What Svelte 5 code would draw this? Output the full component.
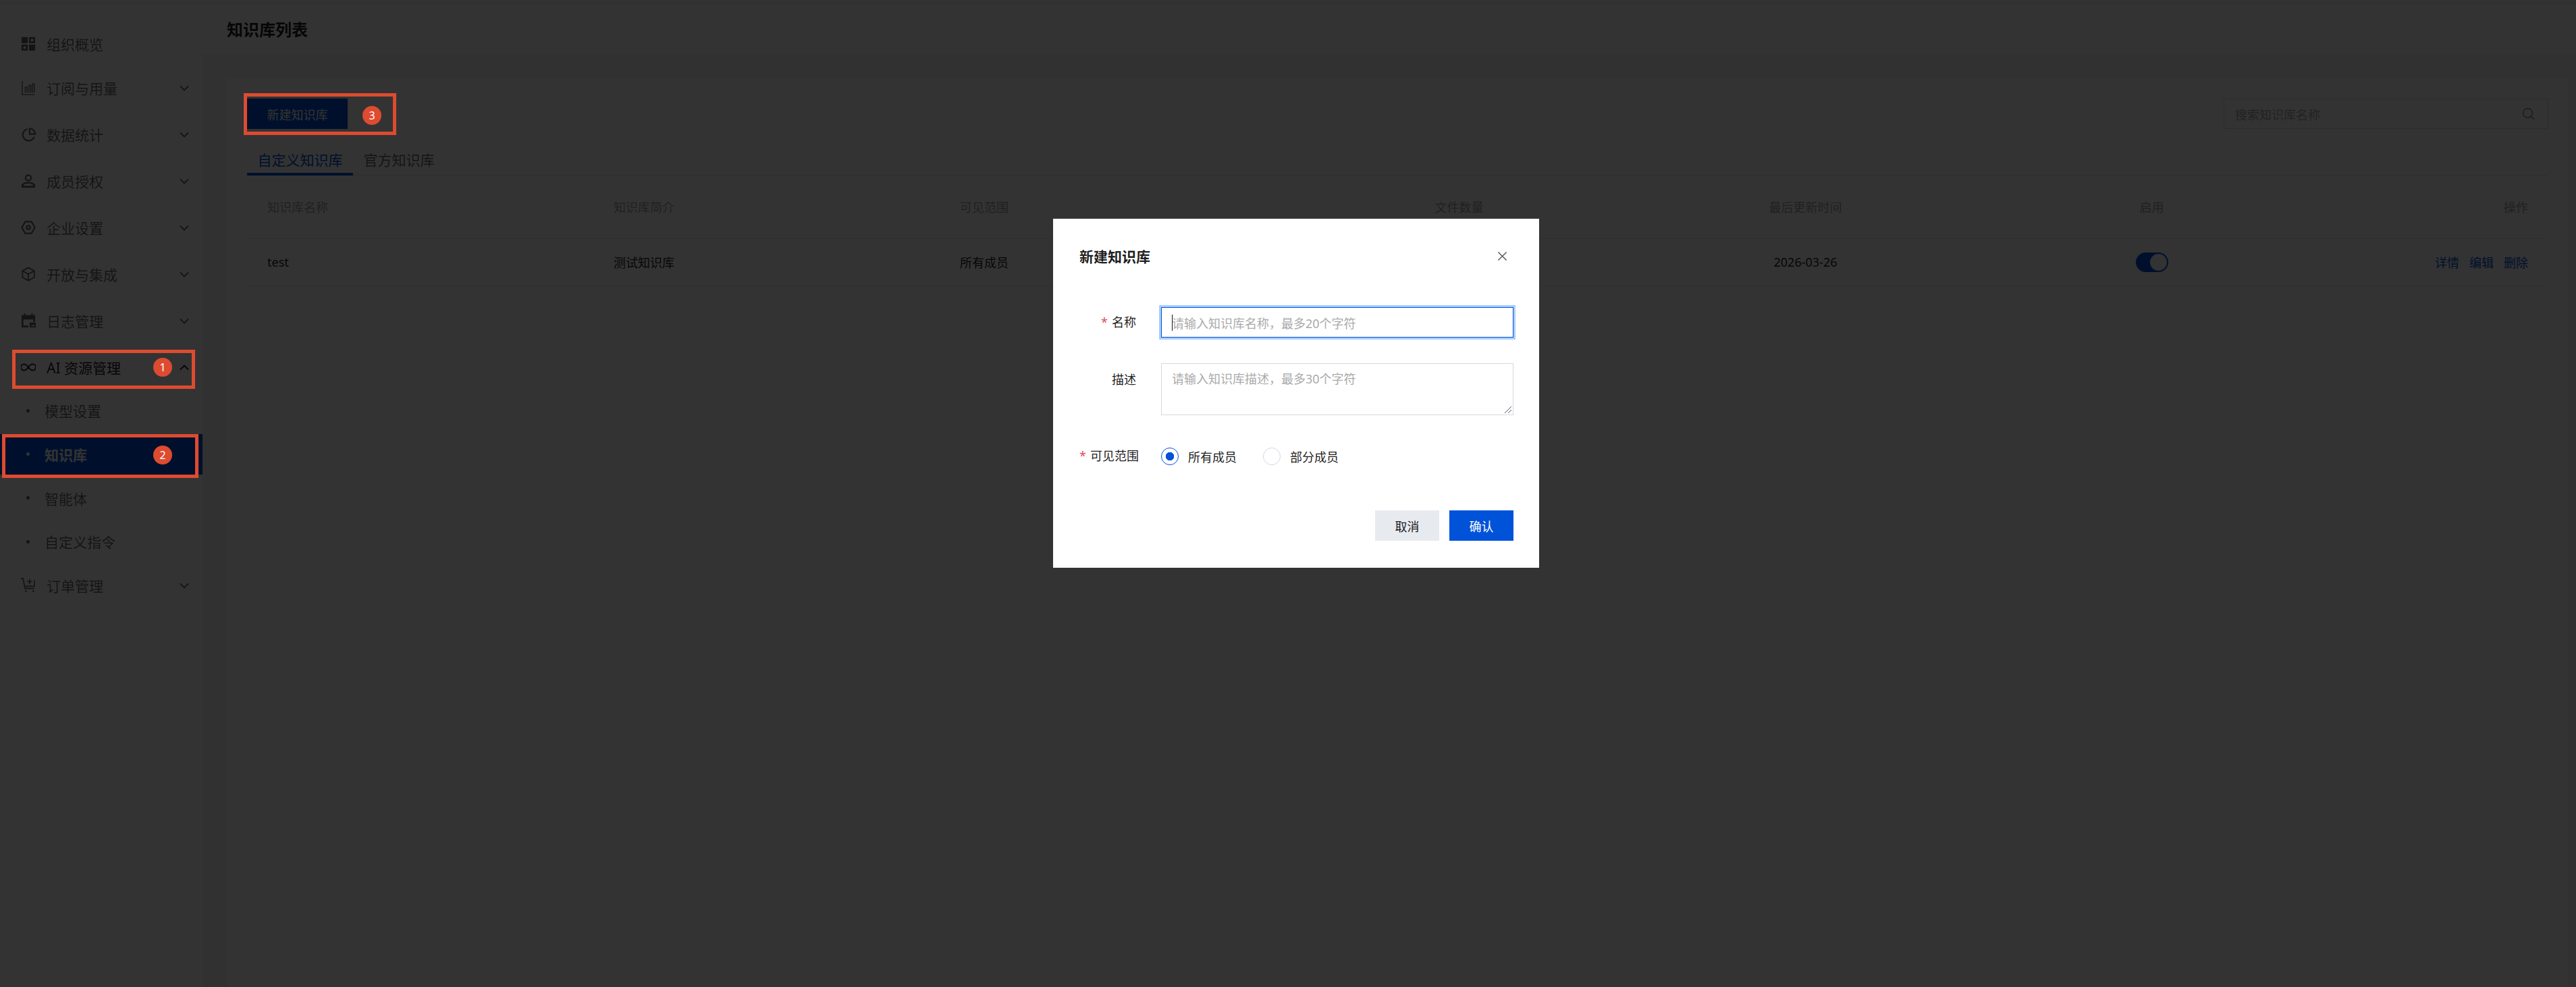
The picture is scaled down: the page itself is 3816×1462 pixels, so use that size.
<script>
  const menu = [
    { id: 'overview', label: '组织概览' },
    { id: 'usage', label: '订阅与用量', arrow: true },
    { id: 'stats', label: '数据统计', arrow: true },
    { id: 'members', label: '成员授权', arrow: true },
    { id: 'company', label: '企业设置', arrow: true },
    { id: 'open', label: '开放与集成', arrow: true },
    { id: 'logs', label: '日志管理', arrow: true },
  ];

  const subMenu = [
    { label: '模型设置' },
    { label: '知识库', active: true, mark: 2 },
    { label: '智能体' },
    { label: '自定义指令' },
  ];

  const columns = ['知识库名称', '知识库简介', '可见范围', '文件数量', '最后更新时间', '启用', '操作'];
</script>

{#snippet menuIcon(id)}
  <svg class="menu-icon" viewBox="0 0 24 24" fill="none" stroke="currentColor" stroke-width="2">
    {#if id === 'overview'}
      <path fill="currentColor" stroke="none" fill-rule="evenodd" d="M1 1h10v10H1zM13 1h10v10H13zm3 3v4h4V4zM1 13h10v10H1zm3 3v4h4v-4zM13 13h10v10H13z" />
    {:else if id === 'usage'}
      <path stroke-width="1.5" d="M2 1v22h20M7 20v-9h3v9M13 20V8h3v12M18.500 20V6h3v14" />
    {:else if id === 'stats'}
      <path stroke-width="2.400" d="M10.500 3.500a9.500 9.500 0 1 0 11 12.500M14 2.500v9h9a9 9 0 0 0-9-9z" />
    {:else if id === 'members'}
      <circle cx="12" cy="7" r="4.500" stroke-width="2.400" />
      <path fill="currentColor" stroke="none" fill-rule="evenodd" d="M1 23v-4c0-3 5-5.500 11-5.500S23 16 23 19v4zm3-3h16v-1c-1-1.500-4-2.800-8-2.800S5 17.500 4 19z" />
    {:else if id === 'company'}
      <path stroke-width="2.400" d="M7 2.500h10l5.500 9.500-5.500 9.500H7L1.500 12z" />
      <circle cx="12" cy="12" r="3" stroke-width="2.400" />
    {:else if id === 'open'}
      <path d="M12 1.500l9.500 5.300v10.400L12 22.500l-9.500-5.300V6.800zM2.500 6.800L12 12l9.500-5.200M12 12v10.500" />
    {:else if id === 'logs'}
      <path fill="currentColor" stroke="none" fill-rule="evenodd" d="M1 3h4V0h2v3h10V0h2v3h4v11h-3V10H4v10h8v3H1zM14 15h10v8H14zm3 4v2h5v-2z" />
    {/if}
  </svg>
{/snippet}

{#snippet arrow(up = false)}
  <svg class="arrow" class:up viewBox="0 0 14 9" fill="none" stroke="currentColor" stroke-width="1.800">
    <path d="M1 1.500l6 6 6-6" />
  </svg>
{/snippet}

<div class="page">
  <div class="strip"></div>

  <div class="body">
    <aside class="sidebar">
      <nav class="menu">
        {#each menu as item}
          <div class="item">
            {@render menuIcon(item.id)}
            <span class="item-label">{item.label}</span>
            {#if item.arrow}{@render arrow()}{/if}
          </div>
        {/each}

        <div class="item item-open">
          <svg class="menu-icon" viewBox="0 0 24 24" fill="none" stroke="currentColor" stroke-width="2">
            <path d="M12 12c-2.500-3.500-4.500-5-7-5a5 5 0 0 0 0 10c2.500 0 4.500-1.500 7-5s4.500-5 7-5a5 5 0 0 1 0 10c-2.500 0-4.500-1.500-7-5z" />
          </svg>
          <span class="item-label">AI 资源管理</span>
          {@render arrow(true)}
          <span class="mark mark-ai"><i class="badge">1</i></span>
        </div>

        {#each subMenu as sub}
          <div class="sub" class:active={sub.active}>
            <span class="dot"></span>
            <span>{sub.label}</span>
            {#if sub.mark}<span class="mark mark-kb"><i class="badge">{sub.mark}</i></span>{/if}
          </div>
        {/each}

        <div class="item">
          <svg class="menu-icon" viewBox="0 0 24 24" fill="none" stroke="currentColor" stroke-width="1.800">
            <path d="M0 1h3.500l3 16h15M5 13.500h17V4M14 2v8M10 6h8" />
            <circle cx="8" cy="21.500" r="1.500" fill="currentColor" stroke="none" />
            <circle cx="20" cy="21.500" r="1.500" fill="currentColor" stroke="none" />
          </svg>
          <span class="item-label">订单管理</span>
          {@render arrow()}
        </div>
      </nav>
    </aside>

    <div class="main">
      <header class="topbar">
        <h1>知识库列表</h1>
      </header>

      <section class="card">
        <div class="toolbar">
          <div class="create-wrap">
            <button type="button" class="btn-create">新建知识库</button>
            <span class="mark mark-create"><i class="badge">3</i></span>
          </div>
          <div class="search">
            <span>搜索知识库名称</span>
            <svg viewBox="0 0 20 20" fill="none" stroke="currentColor" stroke-width="1.200">
              <circle cx="9" cy="9" r="6.500" />
              <path d="M13.500 13.500l4.500 4.500" />
            </svg>
          </div>
        </div>

        <div class="tabs">
          <span class="tab tab-active">自定义知识库</span>
          <span class="tab">官方知识库</span>
        </div>

        <table>
          <thead>
            <tr>
              {#each columns as col}<th>{col}</th>{/each}
            </tr>
          </thead>
          <tbody>
            <tr>
              <td>test</td>
              <td>测试知识库</td>
              <td>所有成员</td>
              <td>1</td>
              <td>2026-03-26</td>
              <td><span class="switch"><span class="knob"></span></span></td>
              <td class="actions"><a href="#a">详情</a><a href="#a">编辑</a><a href="#a">删除</a></td>
            </tr>
          </tbody>
        </table>
      </section>
    </div>
  </div>

  <div class="mask">
    <div class="dialog">
      <div class="dialog-head">
        <h2>新建知识库</h2>
        <svg class="close" viewBox="0 0 16 16" fill="none" stroke="currentColor" stroke-width="1.500">
          <path d="M1.500 1.500l13 13M14.500 1.500l-13 13" />
        </svg>
      </div>

      <div class="field">
        <span class="field-label"><em>*</em>名称</span>
        <div class="input">
          <span class="caret"></span>
          <span class="placeholder">请输入知识库名称，最多20个字符</span>
        </div>
      </div>

      <div class="field field-desc">
        <span class="field-label">描述</span>
        <div class="textarea">
          <span class="placeholder">请输入知识库描述，最多30个字符</span>
          <svg class="grip" viewBox="0 0 12 12" stroke="#555" stroke-width="1">
            <path d="M1 11L11 1M6 11l5-5" />
          </svg>
        </div>
      </div>

      <div class="field field-radio">
        <span class="field-label"><em>*</em>可见范围</span>
        <div class="radios">
          <span class="radio radio-on"><span class="circle"></span>所有成员</span>
          <span class="radio"><span class="circle"></span>部分成员</span>
        </div>
      </div>

      <div class="dialog-foot">
        <button type="button" class="btn btn-cancel">取消</button>
        <button type="button" class="btn btn-ok">确认</button>
      </div>
    </div>
  </div>
</div>

<style>
  :global(body) {
    margin: 0;
    font-family: "Noto Sans", "Noto Sans CJK SC", sans-serif;
  }
  .page {
    position: relative;
    display: flex;
    flex-direction: column;
    width: 3816px;
    height: 1462px;
    overflow: hidden;
    background: #ffffff;
    color: rgba(0, 0, 0, 0.9);
  }
  .strip {
    height: 5px;
    flex: none;
    box-sizing: border-box;
    border-bottom: 1px solid #e4e4e4;
  }
  .body {
    display: flex;
    flex: 1;
    min-height: 0;
  }

  .sidebar {
    width: 300px;
    flex: none;
    background: #fff;
  }
  .menu {
    padding-top: 30px;
    color: rgba(0, 0, 0, 0.6);
    font-size: 21px;
  }
  .item {
    position: relative;
    display: flex;
    align-items: center;
    height: 60px;
    padding-left: 31px;
    margin-bottom: 9px;
  }
  .item:first-child {
    margin-bottom: 5px;
  }
  .item-open {
    color: rgba(0, 0, 0, 0.9);
    margin-bottom: 4.330px;
  }
  .menu-icon {
    width: 22px;
    height: 22px;
    flex: none;
  }
  .item-label {
    margin-left: 16px;
  }
  .arrow {
    position: absolute;
    left: 266px;
    top: 26px;
    width: 14px;
    height: 9px;
  }
  .arrow.up {
    transform: rotate(180deg);
  }
  .sub {
    position: relative;
    display: flex;
    align-items: center;
    height: 60px;
    margin-bottom: 4.670px;
    padding-left: 39px;
    gap: 22px;
  }
  .sub.active {
    background: #0052d9;
    color: #fff;
    font-weight: 700;
  }
  .dot {
    width: 5px;
    height: 5px;
    border-radius: 50%;
    background: currentColor;
    flex: none;
  }

  .mark {
    position: absolute;
    z-index: 20;
    box-sizing: border-box;
    border: 5px solid #dd4b30;
  }
  .badge {
    position: absolute;
    width: 28px;
    height: 28px;
    border-radius: 50%;
    background: #dd4b30;
    color: #fff;
    font-size: 16px;
    font-style: normal;
    font-weight: 400;
    line-height: 28px;
    text-align: center;
  }
  .mark-ai {
    left: 18px;
    top: 4px;
    width: 271px;
    height: 58px;
  }
  .mark-ai .badge {
    left: 204px;
    top: 7px;
  }
  .mark-kb {
    left: 3px;
    top: 0;
    width: 291px;
    height: 65px;
  }
  .mark-kb .badge {
    left: 219px;
    top: 12px;
  }
  .mark-create {
    left: -5px;
    top: -8px;
    width: 226px;
    height: 62px;
  }
  .mark-create .badge {
    left: 171px;
    top: 14px;
  }

  .main {
    flex: 1;
    min-width: 0;
    background: #f3f5f8;
  }
  .topbar {
    display: flex;
    align-items: center;
    height: 75px;
    padding-left: 36px;
    background: #fff;
  }
  .topbar h1 {
    margin: 0;
    font-size: 24px;
    font-weight: 700;
  }
  .card {
    margin: 36px 11px 0 36px;
    padding: 30px 30px 0;
    height: 1346px;
    background: #fff;
  }
  .toolbar {
    display: flex;
    justify-content: space-between;
  }
  .create-wrap {
    position: relative;
  }
  .btn-create {
    display: block;
    width: 149px;
    height: 45px;
    border: 0;
    padding: 0;
    background: #0052d9;
    color: #fff;
    font: inherit;
    font-size: 18px;
  }
  .search {
    display: flex;
    align-items: center;
    justify-content: space-between;
    box-sizing: border-box;
    width: 481px;
    height: 45px;
    padding: 0 18px 0 16px;
    border: 1px solid #dcdcdc;
    font-size: 18px;
    color: #aaa;
  }
  .search svg {
    width: 21px;
    height: 21px;
    color: #777;
  }
  .tabs {
    display: flex;
    margin-top: 22px;
    height: 46px;
    border-bottom: 1px solid #e7e7e7;
    font-size: 21px;
    color: rgba(0, 0, 0, 0.6);
  }
  .tab {
    padding: 0 15.500px;
    line-height: 48px;
    height: 46px;
    box-sizing: border-box;
  }
  .tab-active {
    color: #0052d9;
    border-bottom: 4px solid #0052d9;
    height: 47px;
  }
  table {
    width: 3409px;
    border-collapse: collapse;
    table-layout: fixed;
    font-size: 18px;
  }
  th,
  td {
    width: 513px;
    padding: 0 30px;
    box-sizing: border-box;
    text-align: center;
    border-bottom: 1px solid #e7e7e7;
    font-weight: inherit;
  }
  th {
    height: 93px;
    color: rgba(0, 0, 0, 0.4);
  }
  td {
    height: 70px;
  }
  th:nth-child(-n + 3),
  td:nth-child(-n + 3) {
    text-align: left;
  }
  th:last-child,
  td:last-child {
    width: 331px;
    text-align: right;
  }
  .switch {
    display: inline-flex;
    justify-content: flex-end;
    align-items: center;
    vertical-align: middle;
    box-sizing: border-box;
    width: 48px;
    height: 29px;
    padding-right: 2px;
    border-radius: 15px;
    background: #0052d9;
  }
  .knob {
    width: 25px;
    height: 25px;
    border-radius: 50%;
    background: #fff;
  }
  .actions a {
    margin-left: 15px;
    color: #0052d9;
    text-decoration: none;
  }

  .mask {
    position: absolute;
    inset: 0;
    z-index: 10;
    display: flex;
    justify-content: center;
    align-items: flex-start;
    padding-top: 324px;
    padding-left: 24px;
    box-sizing: border-box;
    background: rgba(0, 0, 0, 0.8);
  }
  .dialog {
    box-sizing: border-box;
    width: 720px;
    height: 517px;
    padding: 0 38px 0 39px;
    background: #fff;
    font-size: 18px;
    color: rgba(0, 0, 0, 0.9);
  }
  .dialog-head {
    display: flex;
    align-items: center;
    justify-content: space-between;
    height: 110px;
    padding-right: 9px;
  }
  .dialog-head h2 {
    margin: 0;
    font-size: 21px;
    font-weight: 700;
  }
  .close {
    width: 15px;
    height: 15px;
    color: #555;
  }
  .field {
    display: flex;
    margin-top: 21px;
  }
  .field-label {
    width: 84px;
    margin-right: 37px;
    flex: none;
    text-align: right;
    line-height: 45px;
    white-space: nowrap;
  }
  .field-label em {
    margin-right: 6px;
    color: #e34d59;
    font-style: normal;
  }
  .input {
    position: relative;
    flex: 1;
    display: flex;
    align-items: center;
    box-sizing: border-box;
    height: 45px;
    padding-left: 15px;
    border: 1px solid #0052d9;
    box-shadow: 0 0 0 3px #a8cdfa;
  }
  .caret {
    position: absolute;
    left: 15px;
    top: 10px;
    width: 1px;
    height: 24px;
    background: #111;
  }
  .placeholder {
    color: #aaa;
  }
  .field-desc {
    margin-top: 38px;
  }
  .field-desc .field-label {
    line-height: 48px;
  }
  .textarea {
    position: relative;
    flex: 1;
    box-sizing: border-box;
    height: 77px;
    padding: 8px 15px;
    border: 1px solid #d3d8e0;
  }
  .grip {
    position: absolute;
    right: 1px;
    bottom: 1px;
    width: 12px;
    height: 12px;
  }
  .field-radio {
    margin-top: 38px;
  }
  .radios {
    display: flex;
    align-items: center;
    gap: 39px;
    height: 45px;
  }
  .radio {
    display: flex;
    align-items: center;
    gap: 14px;
  }
  .circle {
    box-sizing: border-box;
    width: 26px;
    height: 26px;
    border: 1px solid #d3d8e0;
    border-radius: 50%;
  }
  .radio-on .circle {
    border-color: #0052d9;
    background: radial-gradient(circle, #0052d9 0 6px, #fff 6.500px);
  }
  .dialog-foot {
    display: flex;
    justify-content: flex-end;
    gap: 15px;
    margin-top: 58px;
  }
  .btn {
    width: 95px;
    height: 45px;
    border: 0;
    padding: 0;
    font: inherit;
    color: inherit;
  }
  .btn-cancel {
    background: #e7eaef;
  }
  .btn-ok {
    background: #0052d9;
    color: #fff;
  }
</style>
